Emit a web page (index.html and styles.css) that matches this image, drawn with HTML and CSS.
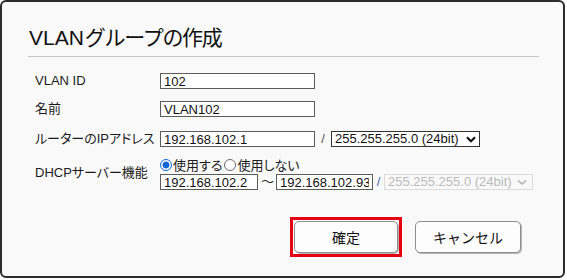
FILE: index.html
```html
<!DOCTYPE html>
<html lang="ja">
<head>
<meta charset="utf-8">
<title>VLANグループの作成</title>
<link rel="stylesheet" href="styles.css">
</head>
<body>
<div class="dialog">
  <h1 class="title">VLAN<span class="title-ja">グループの作成</span></h1>
  <div class="rule"></div>
  <div class="form">
    <div class="row row-id">
      <label class="label">VLAN ID</label>
      <input class="text w-long" type="text" value="102">
    </div>
    <div class="row row-name">
      <label class="label">名前</label>
      <input class="text w-long" type="text" value="VLAN102">
    </div>
    <div class="row row-ip">
      <label class="label">ルーターのIPアドレス</label>
      <input class="text w-long" type="text" value="192.168.102.1">
      <span class="slash slash-ip">/</span>
      <div class="select-wrap">
        <select class="select">
          <option>255.255.255.0 (24bit)</option>
        </select>
        <svg class="chev" width="10" height="7" viewBox="0 0 10 7"><path d="M1 1.2 L5 5.2 L9 1.2" fill="none" stroke="#111" stroke-width="2.2"/></svg>
      </div>
    </div>
    <div class="row-dhcp">
      <label class="label">DHCPサーバー機能</label>
      <div class="dhcp-body">
        <div class="radios">
          <label class="radio-item"><input class="radio" type="radio" name="dhcp" checked>使用する</label>
          <label class="radio-item"><input class="radio" type="radio" name="dhcp">使用しない</label>
        </div>
        <div class="range">
          <input class="text w-short" type="text" value="192.168.102.2">
          <span class="tilde">～</span>
          <input class="text w-short2" type="text" value="192.168.102.93">
          <span class="slash slash-range">/</span>
          <div class="select-wrap">
            <select class="select disabled" disabled>
              <option>255.255.255.0 (24bit)</option>
            </select>
            <svg class="chev chev-dis" width="10" height="7" viewBox="0 0 10 7"><path d="M1 1.5 L5 5 L9 1.5" fill="none" stroke="#b0b0b0" stroke-width="1.6"/></svg>
          </div>
        </div>
      </div>
    </div>
  </div>
  <div class="actions">
    <span class="focus-ring"><button class="btn btn-ok" type="button">確定</button></span>
    <button class="btn btn-cancel" type="button">キャンセル</button>
  </div>
</div>
</body>
</html>
```
FILE: styles.css
```css
* {
  box-sizing: border-box;
}

html,
body {
  margin: 0;
  padding: 0;
  background: #ffffff;
}

body {
  font-family: "Liberation Sans", Arial, "Noto Sans CJK JP", sans-serif;
  font-size: 13px;
  color: #1b1b1b;
}

.dialog {
  width: 565px;
  height: 278px;
  border: 2px solid #2b2b2b;
  border-radius: 6px;
  background: #f9f9f9;
  padding-top: 24px;
}

.title {
  margin: 0 0 0 27px;
  font-size: 21px;
  line-height: 24px;
  font-weight: normal;
  color: #111;
  white-space: nowrap;
}

.title-ja {
  letter-spacing: -1.3px;
  margin-left: 1px;
}

.rule {
  margin: 6px 0 0 26px;
  width: 511px;
  height: 1px;
  background: #c6c6c6;
}

.form {
  margin-left: 33px;
}

.row {
  display: flex;
  align-items: center;
  height: 16px;
}

.row-id {
  margin-top: 16px;
}

.row-name {
  margin-top: 12px;
}

.row-ip {
  margin-top: 14px;
}

.label {
  flex: 0 0 125px;
  width: 125px;
  line-height: 16px;
  white-space: nowrap;
  font-feature-settings: "palt";
  color: #1b1b1b;
}

.text {
  height: 16px;
  margin: 0;
  border: 1px solid #5c5c5c;
  border-radius: 0;
  background: #ffffff;
  padding: 0 3px;
  font-family: "Liberation Sans", Arial, sans-serif;
  font-size: 13px;
  color: #111;
  outline: none;
}

.w-long {
  width: 155px;
}

.w-short {
  width: 98px;
}

.w-short2 {
  width: 97px;
}

.slash {
  display: inline-block;
  text-align: center;
  font-size: 13px;
  line-height: 16px;
}

.slash-ip {
  width: 16px;
  color: #555;
}

.slash-range {
  width: 11px;
  color: #4a6aa8;
}

.select-wrap {
  position: relative;
  display: inline-block;
  height: 16px;
}

.select {
  appearance: none;
  -webkit-appearance: none;
  width: 149px;
  height: 16px;
  margin: 0;
  border: 1px solid #333;
  border-radius: 0;
  background: #ffffff;
  padding: 0 0 0 3px;
  font-family: "Liberation Sans", Arial, sans-serif;
  font-size: 13px;
  line-height: 14px;
  color: #111;
  outline: none;
}

.select.disabled {
  border-color: #cfcfcf;
  background: #f9f9f9;
  color: #a0a0a0;
}

.chev {
  position: absolute;
  right: 4px;
  top: 5px;
}

.chev-dis {
  right: 6px;
}

.row-dhcp {
  display: flex;
  align-items: center;
  margin-top: 8px;
}

.dhcp-body {
  display: flex;
  flex-direction: column;
}

.radios {
  display: flex;
  align-items: center;
  height: 19px;
}

.radio-item {
  display: flex;
  align-items: center;
  font-feature-settings: "palt";
  font-size: 13px;
  color: #1b1b1b;
  white-space: nowrap;
  margin-right: 2px;
}

.radio {
  appearance: none;
  -webkit-appearance: none;
  width: 12px;
  height: 12px;
  margin: 0 1px 0 0;
  border: 1px solid #6a6a6a;
  border-radius: 50%;
  background: #ffffff;
}

.radio:checked {
  border-color: #1466d6;
  background: radial-gradient(circle, #1466d6 0, #1466d6 3.2px, #ffffff 3.8px);
}

.range {
  display: flex;
  align-items: center;
  height: 16px;
}

.tilde {
  width: 12px;
  margin: 0 3px;
  text-align: center;
  font-size: 13px;
  line-height: 16px;
  color: #222;
}

.actions {
  display: flex;
  justify-content: flex-end;
  align-items: flex-start;
  gap: 13px;
  margin-top: 27px;
  padding-right: 42px;
}

.focus-ring {
  display: block;
  border: 3px solid #e60012;
  padding: 1px;
}

.btn {
  display: block;
  height: 32px;
  margin: 0;
  border: 1px solid #8f8f8f;
  border-radius: 5px;
  background: #fdfdfd;
  box-shadow: 1px 1px 0 #b5b5b5;
  font-family: "Liberation Sans", Arial, "Noto Sans CJK JP", sans-serif;
  font-size: 14px;
  color: #111;
  padding: 0;
}

.btn-ok {
  width: 104px;
}

.btn-cancel {
  width: 106px;
  margin-top: 4px;
}
```
